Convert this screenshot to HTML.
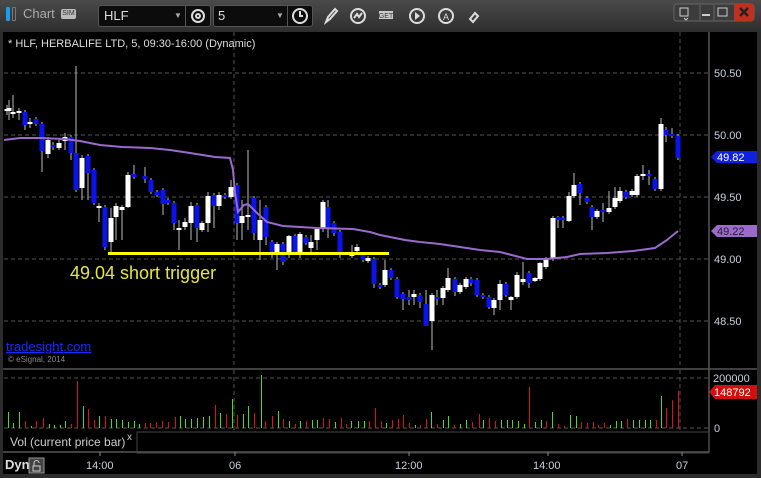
<!DOCTYPE html>
<html><head><meta charset="utf-8"><style>
*{margin:0;padding:0;box-sizing:border-box}
body{width:761px;height:478px;overflow:hidden;background:#2c2c2c;font-family:"Liberation Sans",sans-serif;position:relative}
.abs{position:absolute}
</style></head><body>
<div class="abs" style="left:0;top:0;width:761px;height:32px;background:linear-gradient(#4a4a4a,#2e2e2e)"></div>
<div class="abs" style="left:6px;top:7px;width:4px;height:14px;background:#1a9cf0;border-radius:1px"></div>
<div class="abs" style="left:12px;top:7px;width:4px;height:14px;border:1px solid #777;border-radius:1px"></div>
<div class="abs" style="left:23px;top:6px;color:#aaa;font-size:13px">Chart</div>
<div class="abs" style="left:61px;top:9px;width:15px;height:10px;background:#bbb;color:#333;font-size:7px;line-height:10px;text-align:center;border-radius:2px">SIM</div>
<div class="abs" style="left:98px;top:5px;width:113px;height:22px;background:#0c0c0c;border:1px solid #555;border-radius:3px"></div>
<div class="abs" style="left:104px;top:8px;color:#ddd;font-size:13px">HLF</div>
<div class="abs" style="left:174px;top:11px;color:#aaa;font-size:8px">▼</div>
<div class="abs" style="left:185px;top:6px;width:1px;height:20px;background:#555"></div>
<div class="abs" style="left:213px;top:5px;width:100px;height:22px;background:#0c0c0c;border:1px solid #555;border-radius:3px"></div>
<div class="abs" style="left:218px;top:8px;color:#ddd;font-size:13px">5</div>
<div class="abs" style="left:276px;top:11px;color:#aaa;font-size:8px">▼</div>
<div class="abs" style="left:287px;top:6px;width:1px;height:20px;background:#555"></div>
<svg class="abs" style="left:0;top:0" width="761" height="32">
<g fill="none" stroke="#ddd" stroke-width="2">
<circle cx="198" cy="16" r="6"/><circle cx="198" cy="16" r="2"/>
<circle cx="300" cy="16" r="7"/><path d="M300 11v5h3"/>
<path d="M326 22l2-5 7-8 2 2-7 8z"/>
<circle cx="358" cy="16" r="7"/><path d="M354 18l3-4 2 3 3-4"/>
<circle cx="417" cy="16" r="7"/><circle cx="446" cy="16" r="7"/>
<path d="M470 19l5-6 3 3-5 6z"/>
</g>
<path d="M415 12v8l5-4z" fill="#ddd"/>
<text x="446" y="20" fill="#ddd" font-size="9" text-anchor="middle" font-family="Liberation Sans">A</text>
<rect x="379" y="11" width="14" height="8" fill="#ccc"/><text x="386" y="18" fill="#333" font-size="7" text-anchor="middle" font-family="Liberation Sans">GET</text>
<rect x="674" y="4" width="80" height="17" rx="3" fill="#3c3c3c" stroke="#666"/>
<rect x="734" y="4" width="20" height="17" rx="2" fill="#c03020"/>
<path d="M700 5v15M714 5v15" stroke="#666"/>
<path d="M680 8h8v8h-8z M684 18l2 2 2-2" stroke="#ccc" fill="none"/>
<path d="M702 15h8" stroke="#ccc" stroke-width="2"/>
<rect x="718" y="8" width="9" height="8" stroke="#ccc" fill="none"/>
<path d="M740 8l8 8M748 8l-8 8" stroke="#222" stroke-width="2.5"/>
</svg>
<div class="abs" style="left:3px;top:32px;width:754px;height:442px;background:#000"></div>
<svg class="abs" style="left:0;top:0" width="761" height="478" id="ch" font-family="Liberation Sans">
<g stroke="#555" stroke-dasharray="4 3" stroke-width="1">
<path d="M4 73H709M4 135H709M4 197H709M4 259H709M4 321H709"/>
<path d="M234 32V368M680 32V368M234 370V430M680 370V430"/>
<path d="M4 378H709M4 428H709"/>
</g>
<path d="M709 32V452M3 369H757M3 452H709" stroke="#555" stroke-width="1.5"/>
<rect x="137" y="432" width="572" height="21" fill="none" stroke="#444"/>
<g id="cd"></g>
<g id="vol"></g>
<polyline fill="none" stroke="#9a6acc" stroke-width="2" points="4,140 20,138 40,138 64,139 80,141 100,145 122,147 150,148 170,150 190,153 215,157 230,158 233,170 235,193 238,212 244,205 248,204 257,213 267,222 283,226 317,228 353,229 370,232 380,235 390,237 405,240 420,242 440,244 460,247 480,250 500,252 527,259 547,259 567,257 580,254 607,253 633,251 655,248 667,240 678,231"/>
<rect x="108" y="252" width="281" height="3" fill="#ffff00"/>
<text x="70" y="279" fill="#e6e640" font-size="18">49.04 short trigger</text>
<text x="6" y="351" fill="#1a2aff" font-size="13" text-decoration="underline">tradesight.com</text>
<text x="8" y="362" fill="#888" font-size="8">© eSignal, 2014</text>
<text x="8" y="47" fill="#ddd" font-size="11">* HLF, HERBALIFE LTD, 5, 09:30-16:00 (Dynamic)</text>
<g fill="#c8d0dc" font-size="11">
<text x="714" y="77">50.50</text><text x="714" y="139">50.00</text><text x="714" y="201">49.50</text><text x="714" y="263">49.00</text><text x="714" y="325">48.50</text>
<text x="713" y="382">200000</text><text x="714" y="432">0</text>
<text x="86" y="469">14:00</text><text x="229" y="469">06</text><text x="395" y="469">12:00</text><text x="533" y="469">14:00</text><text x="676" y="469">07</text>
</g>
<path d="M100 452v4M235 452v4M409 452v4M548 452v4M682 452v4" stroke="#888"/>
<path d="M711 157l6-6h40v12h-40z" fill="#1020e0"/><text x="717" y="161" fill="#fff" font-size="11">49.82</text>
<path d="M711 231l6-6h40v12h-40z" fill="#9a6acc"/><text x="717" y="235" fill="#222" font-size="11">49.22</text>
<path d="M709 392l6-7h42v14h-42z" fill="#d01010"/><text x="714" y="396" fill="#fff" font-size="11">148792</text>
<text x="10" y="446" fill="#ccc" font-size="12">Vol (current price bar)</text>
<text x="127" y="440" fill="#ccc" font-size="10">x</text>
<text x="5" y="469" fill="#ddd" font-size="13" font-weight="bold">Dyn</text>
<rect x="29" y="458" width="15" height="15" fill="#444" stroke="#999"/>
<path d="M33 466h7v5h-7zM34 466v-3a2.5 2.5 0 0 1 5 0" stroke="#ccc" fill="none"/>
</svg>
<script>
var C=[[7,110,110,105,115],[9,110,109,100,120],[13,113,113,95,118],[19,112,112,108,120],[25,112,125,110,130],[30,123,123,118,128],[36,119,124,117,126],[42,124,151,122,172],[48,154,140,137,158],[53,145,147,142,150],[59,148,143,140,150],[65,141,137,133,150],[71,137,153,135,160],[76,153,190,66,192],[82,188,158,155,200],[88,156,173,154,200],[94,170,203,168,205],[99,207,207,203,222],[105,207,247,205,250],[111,242,218,208,252],[116,217,206,203,240],[122,210,207,205,240],[128,207,175,172,208],[134,174,177,165,179],[145,176,179,167,183],[151,180,192,178,194],[157,192,195,190,197],[163,190,204,188,215],[168,200,203,198,205],[174,203,223,201,230],[179,229,229,220,250],[185,227,222,218,230],[191,223,206,202,240],[197,205,228,203,242],[202,230,223,221,232],[208,223,196,192,232],[214,195,206,193,228],[219,206,195,192,210],[225,195,197,193,199],[231,197,187,180,199],[237,185,223,183,240],[242,223,216,200,240],[248,216,216,150,230],[254,198,233,196,240],[260,240,220,200,260],[266,207,237,205,245],[272,242,253,240,258],[277,252,244,242,270],[283,244,262,242,265],[289,253,236,235,258],[295,236,252,234,255],[300,252,234,232,258],[306,237,243,235,245],[311,248,242,235,252],[317,240,229,228,250],[323,228,202,200,232],[328,207,228,200,238],[334,223,233,221,236],[340,232,252,230,258],[352,256,254,245,258],[357,251,247,244,254],[363,255,260,253,262],[368,261,258,256,263],[374,259,284,257,288],[380,285,287,283,289],[385,285,270,260,287],[391,270,278,268,280],[397,279,297,277,299],[403,294,299,292,310],[409,298,299,290,305],[414,296,295,290,305],[420,295,302,293,308],[426,304,326,290,326],[432,321,295,293,350],[437,297,299,290,305],[443,298,288,286,305],[448,290,278,268,292],[455,279,292,277,296],[460,292,285,283,294],[466,287,279,277,289],[471,279,283,277,286],[477,280,295,278,297],[483,295,297,293,299],[489,297,307,295,309],[494,308,300,298,315],[500,300,284,280,310],[506,284,295,282,297],[511,299,298,296,310],[517,297,275,272,299],[523,281,280,262,285],[529,273,283,271,288],[535,280,279,277,282],[540,279,263,262,281],[546,267,259,257,269],[553,259,218,216,261],[558,218,219,216,228],[563,218,220,216,228],[569,221,196,192,222],[574,196,185,173,198],[580,184,193,182,205],[587,198,202,196,204],[592,207,217,205,230],[597,217,211,209,219],[603,210,212,203,222],[609,212,208,191,214],[615,207,198,187,209],[620,201,191,187,203],[626,192,197,190,199],[632,195,191,189,197],[637,195,176,174,197],[643,175,175,165,180],[649,174,176,170,185],[655,179,189,177,191],[661,189,124,118,191],[666,130,135,127,142],[672,134,136,128,138],[678,136,158,134,160]];
var s='';C.forEach(function(c){var x=c[0],o=c[1],cl=c[2],h=c[3],l=c[4];var up=cl<=o;var col=up?'#ffffff':'#0a14e8';var t=Math.min(o,cl),b=Math.max(o,cl);if(b-t<2){t-=1;b+=1;}
s+='<line x1="'+x+'" y1="'+h+'" x2="'+x+'" y2="'+l+'" stroke="#bbb" stroke-width="1"/>';
s+='<rect x="'+(x-2.5)+'" y="'+t+'" width="5" height="'+(b-t)+'" fill="'+col+'"/>';});
document.getElementById('cd').innerHTML=s;
var V="17g16 27g5 39g16 52r7 63g2 75r7 88r10 100g4 111g3 123g3 134g7 147r4 158r47 170g22 182r19 193r8 205g12 217r12 229g9 240g9 252g8 264g6 276g7 287g4 298r5 310r5 322r6 334r7 346r6 360r11 370g12 382g9 394g9 406g10 418g11 430g12 442r23 453g15 465r14 477g29 489r13 500g14 512g22 524r15 538g53 547r7 560r12 572g17 584r9 595g7 607r4 618g7 630r7 642g8 654g8 666r10 678r9 690g6 702r10 712r4 724g7 737g7 749g7 761r7 772r20 784r7 796g5 808r8 820r9 831r13 843r5 855g3 866r3 878r9 889g16 900r4 912g8 924g12 936r3 948g4 960g8 972r6 986r14 996g8 1008r10 1020r7 1032g8 1044g8 1055g8 1067g7 1079g4 1090r41 1102g6 1114g8 1126r7 1138g16 1150r4 1162r2 1174g13 1186g12 1198r6 1209r5 1221r6 1233r3 1245r5 1257g3 1269g7 1280g7 1292r9 1304g8 1316g8 1328g8 1340g8 1352r8 1362g32 1373r20 1385r28 1397r37".split(' ');
var v='';V.forEach(function(e){var m=e.match(/(\d+)([gr])(\d+)/);var x=Math.round(m[1]*761/1568)+0.5;var h=+m[3];v+='<line x1="'+x+'" y1="428" x2="'+x+'" y2="'+(428-h)+'" stroke="'+(m[2]=='g'?'#44dd22':'#dd1111')+'" stroke-width="1"/>';});
document.getElementById('vol').innerHTML=v;
</script>
</body></html>
